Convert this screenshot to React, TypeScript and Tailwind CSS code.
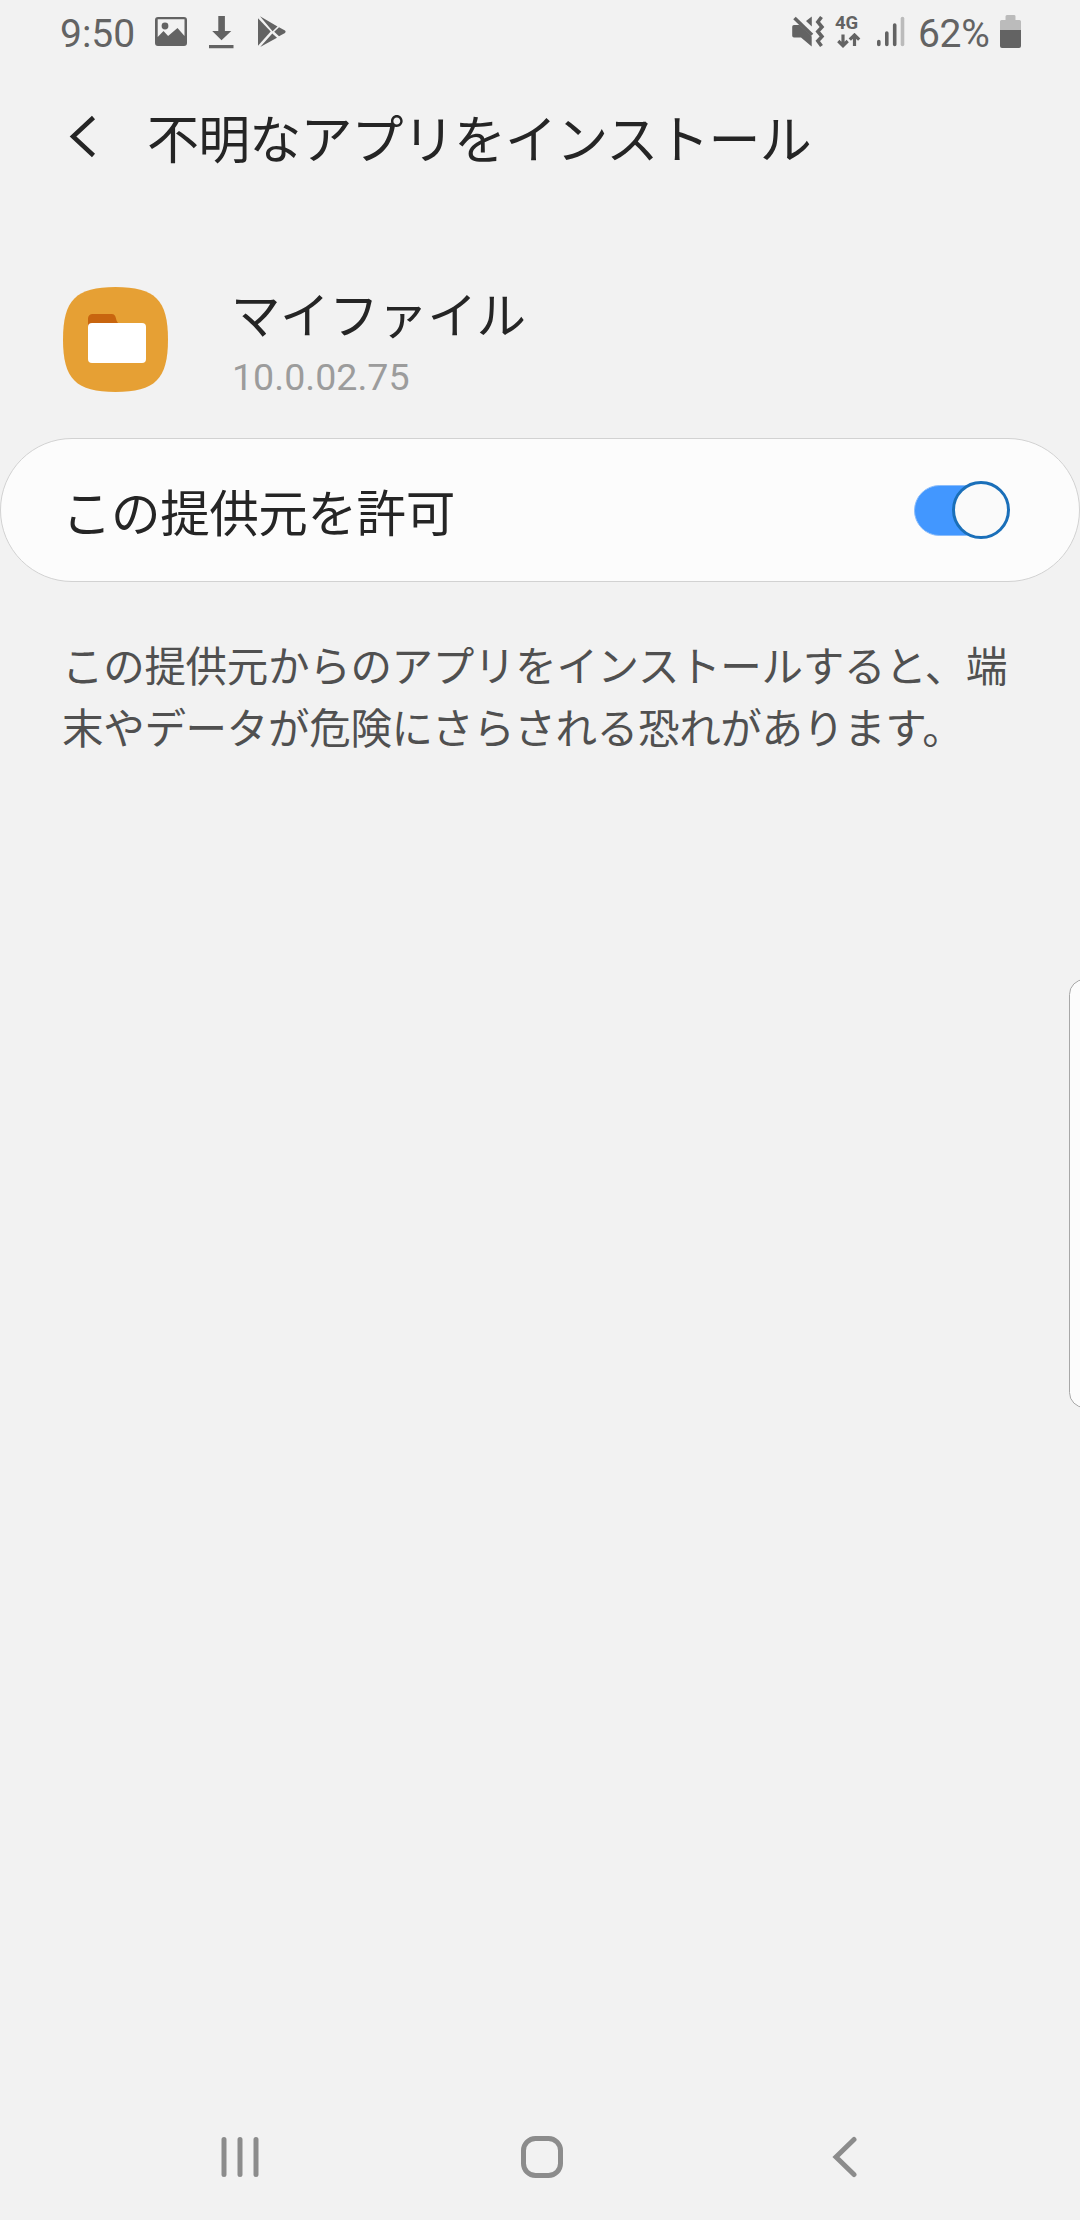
import React from "react";

const JP = "font-['Noto_Sans_CJK_JP',sans-serif]";

function StatusBar() {
  return (
    <div className="flex h-16 w-full items-start text-[#636363] font-['Roboto',sans-serif]">
      <span className="ml-[60px] w-[76px] whitespace-nowrap text-[39px] leading-[68px]">9:50</span>
      <svg className="ml-[18px] shrink-0" width="34" height="64" viewBox="154 0 34 64" fill="#636363">
        <path
          fillRule="evenodd"
          d="M158 17h26a3 3 0 0 1 3 3v23a3 3 0 0 1-3 3h-26a3 3 0 0 1-3-3V20a3 3 0 0 1 3-3zM157.700 19.300V37l5.800-6 4.600 5 9.400-8 7 8V19.300z"
        />
        <circle cx="165" cy="26" r="3.400" />
      </svg>
      <svg className="ml-5 shrink-0" width="28" height="64" viewBox="208 0 28 64" fill="#636363">
        <path d="M218.300 16h6.600v15h6.400l-9.800 9.300-9.300-9.300h6.100zM209 45h24.500v3.200H209z" />
      </svg>
      <svg className="ml-5 shrink-0" width="32" height="64" viewBox="256 0 32 64" fill="#636363">
        <path d="M258 18.300L270.700 31.500 258 45.800z" />
        <path d="M260 16.200L277.500 26.500 272.600 31.200zM279 27.300L285 30.500q1.400 1.200 0 2.400L279 36.300 274.200 31.800zM272.300 33.500L277 37.800 260.200 47z" />
      </svg>
      <svg className="ml-[502px] shrink-0" width="36" height="64" viewBox="790 0 36 64" fill="#636363">
        <path d="M794 25h5.500l12.200 11.500V46.500L801 37.500h-7a1.800 1.800 0 0 1-1.800-1.800v-8.900A1.800 1.800 0 0 1 794 25zM811.800 16.500V26.500L806 21z" />
        <path d="M794.500 18L812 35" stroke="#636363" strokeWidth="3.600" fill="none" />
        <path d="M821.500 17L817.800 22 822 27 817.800 31.500 822 36.500 817.800 41 821.500 46" stroke="#636363" strokeWidth="3.500" fill="none" />
      </svg>
      <div className="ml-2 flex w-7 shrink-0 flex-col pt-[13px]">
        <span className="pl-px text-[18.500px] font-bold leading-[20px]">4G</span>
        <svg width="28" height="16" viewBox="834 33 28 16" fill="none" stroke="#636363" strokeWidth="3.200">
          <path d="M843 34.500V45M838.300 41L843 45.700 847.700 41M854.500 46V36M849.800 39.700L854.500 35 859.200 39.700" />
        </svg>
      </div>
      <svg className="ml-[13px] shrink-0" width="32" height="64" viewBox="875 0 32 64" strokeWidth="3.600" strokeLinecap="round" stroke="#636363">
        <path d="M878.800 41.500V44.500M886.800 33V44.500M894.700 25V44.500" />
        <path d="M902.500 18.500V44.500" stroke="#bbbbbb" />
      </svg>
      <span className="ml-[11px] w-[76px] whitespace-nowrap text-[39px] leading-[68px] tracking-[-0.300px]">62%</span>
      <svg className="ml-[5px] shrink-0" width="24" height="64" viewBox="998 0 24 64">
        <path d="M1006 15h7a1.500 1.500 0 0 1 1.500 1.500V20h4a1.500 1.500 0 0 1 1.500 1.500V31h-21v-9.500a1.500 1.500 0 0 1 1.500-1.500h4v-3.500a1.500 1.500 0 0 1 1.500-1.500z" fill="#bbbbbb" />
        <path d="M999 30h21v16a2 2 0 0 1-2 2h-17a2 2 0 0 1-2-2z" fill="#636363" />
      </svg>
    </div>
  );
}

function Header() {
  return (
    <header className="flex h-[150px] items-start">
      <svg className="ml-16 shrink-0" width="40" height="150" viewBox="64 64 40 150" fill="none" stroke="#252525" strokeWidth="4.500">
        <path d="M93.500 117.500L73 136.500 93.500 155.500" />
      </svg>
      <h1 className={`${JP} ml-[43px] mt-[35px] whitespace-nowrap text-[52px] leading-[76px] tracking-[-0.850px] text-[#252525]`}>
        不明なアプリをインストール
      </h1>
    </header>
  );
}

function AppInfo() {
  return (
    <section className="flex h-[224px] items-start">
      <svg className="ml-[63px] mt-[73px] shrink-0" width="105" height="105" viewBox="0 0 105 105">
        <path d="M52.500 0C92 0 105 13 105 52.500S92 105 52.500 105 0 92 0 52.500 13 0 52.500 0z" fill="#e6a034" />
        <path d="M25 40V31.500a4.500 4.500 0 0 1 4.500-4.500h19c3 0 3.800 1.500 4.500 4.500 .6 2.500 1.200 4 3 5V40z" fill="#c8650f" />
        <rect x="25" y="36" width="58" height="40" rx="4" fill="#fff" />
      </svg>
      <div className="ml-[63px] flex flex-col">
        <h2 className={`${JP} mt-[63px] whitespace-nowrap text-[49.500px] leading-[72px] tracking-[-0.400px] text-[#252525]`}>マイファイル</h2>
        <p className="mt-[3px] whitespace-nowrap pl-px font-['Roboto',sans-serif] text-[37.600px] leading-[50px] text-[#9c9c9c]">10.0.02.75</p>
      </div>
    </section>
  );
}

function PermissionRow() {
  return (
    <section className="flex h-36 items-center justify-between rounded-full border border-[#d2d2d2] bg-[#fcfcfc] pl-[61px] pr-[69px]">
      <span className={`${JP} whitespace-nowrap text-[49.600px] leading-[72px] tracking-[-0.500px] text-[#252525]`}>この提供元を許可</span>
      <button role="switch" aria-checked="true" aria-label="この提供元を許可" className="flex h-[58px] w-24 items-center">
        <span className="h-[51px] w-[76px] shrink-0 rounded-full border border-[#8bbdfb] bg-[#4297ff]" />
        <span className="-ml-[38px] size-[58px] shrink-0 rounded-full border-[3px] border-[#1a6fb9] bg-[#fafafa]" />
      </button>
    </section>
  );
}

function NavigationBar() {
  return (
    <nav className="mt-auto flex h-[126px] items-center pl-[220px]">
      <svg width="40" height="42" viewBox="0 0 40 42" stroke="#8c8c8c" strokeWidth="5" strokeLinecap="round">
        <path d="M4 3.500V38.500M20 3.500V38.500M36 3.500V38.500" />
      </svg>
      <svg className="ml-[260px]" width="44" height="44" viewBox="0 0 44 44" fill="none" stroke="#8c8c8c" strokeWidth="5">
        <rect x="3.500" y="3.500" width="37" height="37" rx="12" />
      </svg>
      <svg className="ml-[266px]" width="28" height="42" viewBox="0 0 28 42" fill="none" stroke="#8c8c8c" strokeWidth="5" strokeLinecap="round">
        <path d="M24 3.500L6 21 24 38.500" />
      </svg>
    </nav>
  );
}

export default function App() {
  return (
    <main lang="ja" className="relative flex h-[2220px] w-[1080px] flex-col overflow-hidden bg-[#f2f2f2]">
      <StatusBar />
      <Header />
      <AppInfo />
      <PermissionRow />
      <p className={`${JP} ml-[62px] mt-[51px] whitespace-nowrap text-[41.500px] leading-[62px] tracking-[-0.300px] text-[#505050]`}>
        この提供元からのアプリをインストールすると、端
        <br />
        末やデータが危険にさらされる恐れがあります。
      </p>
      <NavigationBar />
      <div className="absolute -right-5 top-[979px] h-[429px] w-[31px] rounded-[18px] border border-[#a8a8a8] bg-[#fcfcfc]" />
    </main>
  );
}
